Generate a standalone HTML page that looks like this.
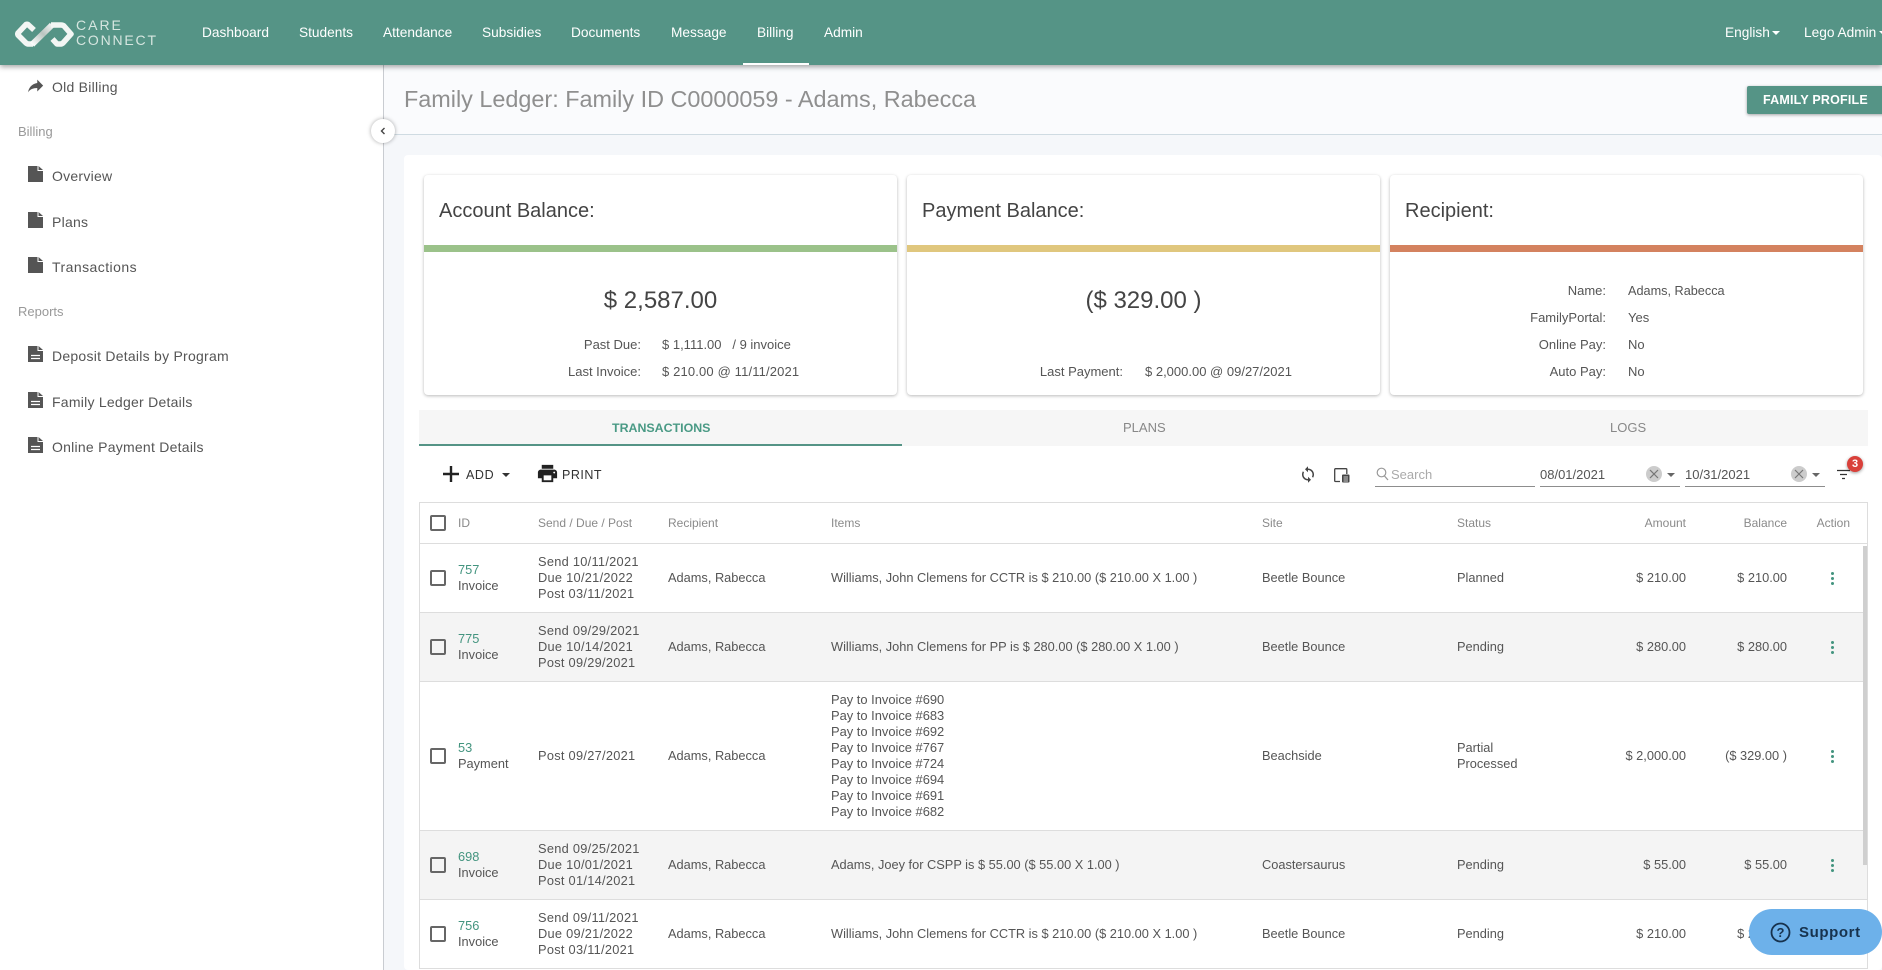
<!DOCTYPE html>
<html><head><meta charset="utf-8"><title>Family Ledger</title>
<style>
*{box-sizing:border-box}
html,body{margin:0;padding:0;width:1882px;height:970px;overflow:hidden;background:#f5f7fa;font-family:"Liberation Sans",sans-serif;font-size:13px;color:#555}
.a{position:absolute;white-space:nowrap;line-height:16px}
.hd{position:absolute;left:0;top:0;width:1882px;height:65px;background:#559486;box-shadow:0 2px 5px rgba(0,0,0,.35);z-index:5}
.nv{position:absolute;top:25px;color:#fff;font-size:13.7px;line-height:16px;white-space:nowrap}
.side{position:absolute;left:0;top:65px;width:384px;height:905px;background:#fff;border-right:1px solid #c9ccd1}
.sl{position:absolute;left:52px;font-size:14px;letter-spacing:.25px;color:#555;line-height:16px;white-space:nowrap}
.sh{position:absolute;left:18px;color:#999;font-size:13px;line-height:16px}
.ic{position:absolute;left:28px}
.card{position:absolute;top:175px;height:220px;width:473px;background:#fff;border-radius:4px;box-shadow:0 1px 3px rgba(0,0,0,.28)}
.card h3{position:absolute;left:15px;top:25px;margin:0;font-size:20px;line-height:22px;font-weight:400;color:#444}
.bar{position:absolute;left:0;right:0;top:70px;height:7px}
.big{position:absolute;left:0;right:0;top:112px;text-align:center;font-size:24px;line-height:28px;color:#444}
.tab{position:absolute;top:420px;font-size:13px;line-height:16px;color:#888}
.r{position:absolute;left:419px;width:1449px;border:1px solid #ddd;border-top:0;background:#fff}
.r.g{background:#f4f4f4}
.c{position:absolute;top:0;bottom:0;display:flex;flex-direction:column;justify-content:center;line-height:16px;white-space:nowrap;color:#555;font-size:12.8px}
.cb{position:absolute;left:10px;top:50%;margin-top:-8px;width:16px;height:16px;border:2px solid #666;border-radius:2px}
.th{color:#8a8a8a;font-size:12px}
.id{color:#43947f}
.d{letter-spacing:.28px}
.it{font-size:12.900px}
.amt{right:181px;text-align:right}
.bal{right:80px;text-align:right}
.keb{position:absolute;left:1411px;top:50%;margin-top:-6px;width:3px;height:13px}
.keb i{display:block;width:3px;height:3px;border-radius:50%;background:#43947f;margin-bottom:2px}
.car{position:absolute;width:0;height:0;border-left:4px solid transparent;border-right:4px solid transparent;border-top:4px solid #666}
.ul{position:absolute;top:486px;height:1px;background:#8d8d8d}
.x{position:absolute;top:466px;width:16px;height:16px;border-radius:50%;background:#ccc}
.lab{position:absolute;text-align:right;white-space:nowrap;line-height:16px;color:#555}
.val{position:absolute;white-space:nowrap;line-height:16px;color:#555}
</style></head><body>

<div class="hd">
<svg class="a" style="left:12px;top:18px" width="66" height="32" viewBox="12 18 66 32">
<defs><linearGradient id="g" x1="0" y1="1" x2="1" y2="0"><stop offset="0" stop-color="#fff"/><stop offset=".55" stop-color="#b9c4c0"/><stop offset="1" stop-color="#f2f2f2"/></linearGradient></defs>
<path d="M34 30 L28 24.500 Q27 24 26 24.500 L18 33 Q17.500 34 18 35 L26 43 Q27 44 29 44 L33 44" fill="none" stroke="#f3f6f4" stroke-width="5.500" stroke-linejoin="round"/>
<path d="M32 44.500 L52 25" fill="none" stroke="url(#g)" stroke-width="6"/>
<path d="M51 25 H61 Q63 25 64 26 L71 34 L63 43 Q62 44 60 44 H57 L52.500 39" fill="none" stroke="#f3f6f4" stroke-width="5.500" stroke-linejoin="round"/>
</svg>
<div class="a" style="left:76px;top:17px;color:#d6e6e0;font-size:14px;letter-spacing:2px">CARE</div>
<div class="a" style="left:76px;top:32px;color:#d6e6e0;font-size:14px;letter-spacing:1.800px">CONNECT</div>
<div class="nv" style="left:202px">Dashboard</div>
<div class="nv" style="left:299px">Students</div>
<div class="nv" style="left:383px">Attendance</div>
<div class="nv" style="left:482px">Subsidies</div>
<div class="nv" style="left:571px">Documents</div>
<div class="nv" style="left:671px">Message</div>
<div class="nv" style="left:757px">Billing</div>
<div class="nv" style="left:824px">Admin</div>
<div style="position:absolute;left:743px;top:63px;width:66px;height:2px;background:#fff"></div>
<div class="nv" style="left:1725px">English</div>
<div class="car" style="left:1772px;top:31px;border-top-color:#fff"></div>
<div class="nv" style="left:1804px">Lego Admin</div>
<div class="car" style="left:1879px;top:31px;border-top-color:#fff"></div>
</div>

<div class="side">
<svg class="ic" style="top:13px" width="16" height="16" viewBox="3 4 19 17"><path d="M14 9V5l7 7-7 7v-4.100c-5 0-8.500 1.600-11 5.100 1-5 4-10 11-11z" fill="#555"/></svg>
<div class="sl" style="top:14px">Old Billing</div>
<div class="sh" style="top:59px">Billing</div>
<svg class="ic" style="top:101px" width="15" height="16" viewBox="0 0 15 16"><path d="M0 0H9.500V5H15V16H0Z M10.500 0 L15 4H10.500Z" fill="#555"/></svg>
<div class="sl" style="top:103px">Overview</div>
<svg class="ic" style="top:147px" width="15" height="16" viewBox="0 0 15 16"><path d="M0 0H9.500V5H15V16H0Z M10.500 0 L15 4H10.500Z" fill="#555"/></svg>
<div class="sl" style="top:149px">Plans</div>
<svg class="ic" style="top:192px" width="15" height="16" viewBox="0 0 15 16"><path d="M0 0H9.500V5H15V16H0Z M10.500 0 L15 4H10.500Z" fill="#555"/></svg>
<div class="sl" style="top:194px;letter-spacing:.45px">Transactions</div>
<div class="sh" style="top:239px">Reports</div>
<svg class="ic" style="top:281px" width="15" height="16" viewBox="0 0 15 16"><path d="M0 0H9.500V5H15V16H0Z M10.500 0 L15 4H10.500Z" fill="#555"/><path d="M3 9.500H12M3 12.500H12" stroke="#fff" stroke-width="1.300"/></svg>
<div class="sl" style="top:283px">Deposit Details by Program</div>
<svg class="ic" style="top:327px" width="15" height="16" viewBox="0 0 15 16"><path d="M0 0H9.500V5H15V16H0Z M10.500 0 L15 4H10.500Z" fill="#555"/><path d="M3 9.500H12M3 12.500H12" stroke="#fff" stroke-width="1.300"/></svg>
<div class="sl" style="top:329px">Family Ledger Details</div>
<svg class="ic" style="top:372px" width="15" height="16" viewBox="0 0 15 16"><path d="M0 0H9.500V5H15V16H0Z M10.500 0 L15 4H10.500Z" fill="#555"/><path d="M3 9.500H12M3 12.500H12" stroke="#fff" stroke-width="1.300"/></svg>
<div class="sl" style="top:374px">Online Payment Details</div>
</div>

<div style="position:absolute;left:384px;top:65px;width:1498px;height:70px;background:#fafbfd;border-bottom:1px solid #cfdbe2"></div>
<div style="position:absolute;left:371px;top:119px;width:24px;height:24px;border-radius:50%;background:#fff;box-shadow:0 0 4px rgba(0,0,0,.35);z-index:3"></div>
<svg style="position:absolute;left:380px;top:127px;z-index:4" width="6" height="8" viewBox="0 0 6 8"><path d="M4.500 1 L1.500 4 L4.500 7" fill="none" stroke="#444" stroke-width="1.400"/></svg>
<div class="a" style="left:404px;top:85px;font-size:23.400px;line-height:28px;color:#8f8f8f">Family Ledger: Family ID C0000059 - Adams, Rabecca</div>
<div style="position:absolute;left:1747px;top:86px;width:140px;height:28px;background:#559486;border-radius:2px;box-shadow:0 1px 3px rgba(0,0,0,.35);color:#fff;font-size:12.500px;font-weight:700;line-height:28px;padding-left:16px;letter-spacing:.2px;white-space:nowrap">FAMILY PROFILE</div>

<div style="position:absolute;left:404px;top:155px;width:1478px;height:815px;background:#fff;border-radius:4px"></div>

<div class="card" style="left:424px"><h3>Account Balance:</h3><div class="bar" style="background:#9bc28a"></div><div class="big">$ 2,587.00</div></div>
<div class="card" style="left:907px"><h3>Payment Balance:</h3><div class="bar" style="background:#e0c77e"></div><div class="big">($ 329.00 )</div></div>
<div class="card" style="left:1390px"><h3>Recipient:</h3><div class="bar" style="background:#d4825f"></div></div>

<div class="lab" style="right:1241px;top:337px">Past Due:</div><div class="val" style="left:662px;top:337px">$ 1,111.00 &nbsp; / 9 invoice</div>
<div class="lab" style="right:1241px;top:364px">Last Invoice:</div><div class="val" style="left:662px;top:364px;letter-spacing:.15px">$ 210.00 @ 11/11/2021</div>
<div class="lab" style="right:759px;top:364px">Last Payment:</div><div class="val" style="left:1145px;top:364px">$ 2,000.00 @ 09/27/2021</div>
<div class="lab" style="right:276px;top:283px">Name:</div><div class="val" style="left:1628px;top:283px;font-size:12.700px">Adams, Rabecca</div>
<div class="lab" style="right:276px;top:310px">FamilyPortal:</div><div class="val" style="left:1628px;top:310px">Yes</div>
<div class="lab" style="right:276px;top:337px">Online Pay:</div><div class="val" style="left:1628px;top:337px">No</div>
<div class="lab" style="right:276px;top:364px">Auto Pay:</div><div class="val" style="left:1628px;top:364px">No</div>

<div style="position:absolute;left:419px;top:410px;width:1449px;height:36px;background:#f6f6f6"></div>
<div style="position:absolute;left:419px;top:444px;width:483px;height:2px;background:#559486"></div>
<div class="tab" style="left:612px;color:#4a9a85;font-weight:700;font-size:12.400px">TRANSACTIONS</div>
<div class="tab" style="left:1123px">PLANS</div>
<div class="tab" style="left:1610px">LOGS</div>

<svg style="position:absolute;left:443px;top:466px" width="16" height="16" viewBox="0 0 16 16"><path d="M6.800 0H9.200V6.800H16V9.200H9.200V16H6.800V9.200H0V6.800H6.800Z" fill="#222"/></svg>
<div class="a" style="left:466px;top:467px;color:#333;letter-spacing:.6px;font-size:12.500px">ADD</div>
<div class="car" style="left:502px;top:473px;border-top-color:#333"></div>
<svg style="position:absolute;left:536px;top:462px" width="23" height="23" viewBox="0 0 24 24"><path d="M19 8H5c-1.660 0-3 1.340-3 3v6h4v4h12v-4h4v-6c0-1.660-1.340-3-3-3zm-3 11H8v-5h8v5zm3-7c-.550 0-1-.450-1-1s.450-1 1-1 1 .450 1 1-.450 1-1 1zm-1-9H6v4h12V3z" fill="#222"/></svg>
<div class="a" style="left:562px;top:467px;color:#333;letter-spacing:.5px;font-size:12.500px">PRINT</div>

<svg style="position:absolute;left:1299px;top:465px" width="18" height="19" viewBox="0 0 24 24"><path d="M12 4V1L8 5l4 4V6c3.310 0 6 2.690 6 6 0 1.010-.250 1.970-.700 2.800l1.460 1.460C19.540 15.030 20 13.570 20 12c0-4.420-3.580-8-8-8zm0 14c-3.310 0-6-2.690-6-6 0-1.010.250-1.970.700-2.800L5.240 7.740C4.460 8.970 4 10.430 4 12c0 4.420 3.580 8 8 8v3l4-4-4-4v3z" fill="#444"/></svg>
<svg style="position:absolute;left:1334px;top:468px" width="16" height="15" viewBox="0 0 16 15"><path d="M6 13.500H1.500Q.7 13.500.7 12.700V1.500Q.7.700 1.500.700H12Q12.800.700 12.800 1.500V6" fill="none" stroke="#444" stroke-width="1.300"/><rect x="8" y="6.500" width="7.500" height="8" rx="1" fill="#444"/><path d="M9.500 9H14M9.500 11H14M9.500 13H14" stroke="#fff" stroke-width=".8"/></svg>
<svg style="position:absolute;left:1376px;top:467px" width="13" height="14" viewBox="0 0 13 14"><circle cx="5.500" cy="5.500" r="4.300" fill="none" stroke="#999" stroke-width="1.200"/><path d="M8.500 9 L12 13" stroke="#999" stroke-width="1.300"/></svg>
<div class="a" style="left:1391px;top:467px;color:#aaa">Search</div>
<div class="ul" style="left:1375px;width:160px"></div>
<div class="a" style="left:1540px;top:467px">08/01/2021</div>
<div class="x" style="left:1646px"><svg width="16" height="16" viewBox="0 0 16 16"><path d="M4 4L12 12M12 4L4 12" stroke="#777" stroke-width="1.200"/></svg></div>
<div class="car" style="left:1667px;top:473px"></div>
<div class="ul" style="left:1540px;width:140px"></div>
<div class="a" style="left:1685px;top:467px">10/31/2021</div>
<div class="x" style="left:1791px"><svg width="16" height="16" viewBox="0 0 16 16"><path d="M4 4L12 12M12 4L4 12" stroke="#777" stroke-width="1.200"/></svg></div>
<div class="car" style="left:1812px;top:473px"></div>
<div class="ul" style="left:1685px;width:140px"></div>
<svg style="position:absolute;left:1836px;top:469px" width="16" height="12" viewBox="0 0 16 12"><path d="M1 1.500H14M4 5.500H11M6 9.500H9" stroke="#333" stroke-width="1.200"/></svg>
<div style="position:absolute;left:1847px;top:456px;width:16px;height:16px;border-radius:50%;background:#d9403a;box-shadow:0 1px 3px rgba(0,0,0,.4);color:#fff;font-size:11px;font-weight:700;line-height:16px;text-align:center">3</div>

<div class="r" style="top:502px;height:42px;border-top:1px solid #ddd">
<div class="cb"></div>
<div class="c th" style="left:38px">ID</div>
<div class="c th" style="left:118px">Send / Due / Post</div>
<div class="c th" style="left:248px">Recipient</div>
<div class="c th" style="left:411px">Items</div>
<div class="c th" style="left:842px">Site</div>
<div class="c th" style="left:1037px">Status</div>
<div class="c th amt">Amount</div>
<div class="c th bal">Balance</div>
<div class="c th" style="right:17px">Action</div>
</div>

<div class="r" style="top:544px;height:69px">
<div class="cb"></div>
<div class="c" style="left:38px"><span class="id">757</span><span>Invoice</span></div>
<div class="c d" style="left:118px"><span>Send 10/11/2021</span><span>Due 10/21/2022</span><span>Post 03/11/2021</span></div>
<div class="c" style="left:248px">Adams, Rabecca</div>
<div class="c" style="left:411px">Williams, John Clemens for CCTR is $ 210.00 ($ 210.00 X 1.00 )</div>
<div class="c" style="left:842px">Beetle Bounce</div>
<div class="c" style="left:1037px">Planned</div>
<div class="c amt">$ 210.00</div>
<div class="c bal">$ 210.00</div>
<div class="keb"><i></i><i></i><i></i></div>
</div>

<div class="r g" style="top:613px;height:69px">
<div class="cb"></div>
<div class="c" style="left:38px"><span class="id">775</span><span>Invoice</span></div>
<div class="c d" style="left:118px"><span>Send 09/29/2021</span><span>Due 10/14/2021</span><span>Post 09/29/2021</span></div>
<div class="c" style="left:248px">Adams, Rabecca</div>
<div class="c" style="left:411px">Williams, John Clemens for PP is $ 280.00 ($ 280.00 X 1.00 )</div>
<div class="c" style="left:842px">Beetle Bounce</div>
<div class="c" style="left:1037px">Pending</div>
<div class="c amt">$ 280.00</div>
<div class="c bal">$ 280.00</div>
<div class="keb"><i></i><i></i><i></i></div>
</div>

<div class="r" style="top:682px;height:149px">
<div class="cb"></div>
<div class="c" style="left:38px"><span class="id">53</span><span>Payment</span></div>
<div class="c d" style="left:118px">Post 09/27/2021</div>
<div class="c" style="left:248px">Adams, Rabecca</div>
<div class="c it" style="left:411px"><span>Pay to Invoice #690</span><span>Pay to Invoice #683</span><span>Pay to Invoice #692</span><span>Pay to Invoice #767</span><span>Pay to Invoice #724</span><span>Pay to Invoice #694</span><span>Pay to Invoice #691</span><span>Pay to Invoice #682</span></div>
<div class="c" style="left:842px">Beachside</div>
<div class="c" style="left:1037px"><span>Partial</span><span>Processed</span></div>
<div class="c amt">$ 2,000.00</div>
<div class="c bal">($ 329.00 )</div>
<div class="keb"><i></i><i></i><i></i></div>
</div>

<div class="r g" style="top:831px;height:69px">
<div class="cb"></div>
<div class="c" style="left:38px"><span class="id">698</span><span>Invoice</span></div>
<div class="c d" style="left:118px"><span>Send 09/25/2021</span><span>Due 10/01/2021</span><span>Post 01/14/2021</span></div>
<div class="c" style="left:248px">Adams, Rabecca</div>
<div class="c" style="left:411px">Adams, Joey for CSPP is $ 55.00 ($ 55.00 X 1.00 )</div>
<div class="c" style="left:842px">Coastersaurus</div>
<div class="c" style="left:1037px">Pending</div>
<div class="c amt">$ 55.00</div>
<div class="c bal">$ 55.00</div>
<div class="keb"><i></i><i></i><i></i></div>
</div>

<div class="r" style="top:900px;height:69px">
<div class="cb"></div>
<div class="c" style="left:38px"><span class="id">756</span><span>Invoice</span></div>
<div class="c d" style="left:118px"><span>Send 09/11/2021</span><span>Due 09/21/2022</span><span>Post 03/11/2021</span></div>
<div class="c" style="left:248px">Adams, Rabecca</div>
<div class="c" style="left:411px">Williams, John Clemens for CCTR is $ 210.00 ($ 210.00 X 1.00 )</div>
<div class="c" style="left:842px">Beetle Bounce</div>
<div class="c" style="left:1037px">Pending</div>
<div class="c amt">$ 210.00</div>
<div class="c bal">$ 210.00</div>
</div>

<div style="position:absolute;left:1863px;top:546px;width:4px;height:319px;background:#cfcfcf"></div>

<div style="position:absolute;left:1749px;top:909px;width:133px;height:46px;border-radius:23px;background:#6db1ea;z-index:6">
<svg style="position:absolute;left:21px;top:13px" width="21" height="21" viewBox="0 0 21 21"><circle cx="10.500" cy="10.500" r="9" fill="none" stroke="#17324d" stroke-width="1.800"/><text x="10.500" y="15" text-anchor="middle" font-family="Liberation Sans, sans-serif" font-size="13" font-weight="700" fill="#17324d">?</text></svg>
<div class="a" style="left:50px;top:16px;color:#17324d;font-size:15px;font-weight:700;letter-spacing:.6px">Support</div>
</div>
</body></html>
